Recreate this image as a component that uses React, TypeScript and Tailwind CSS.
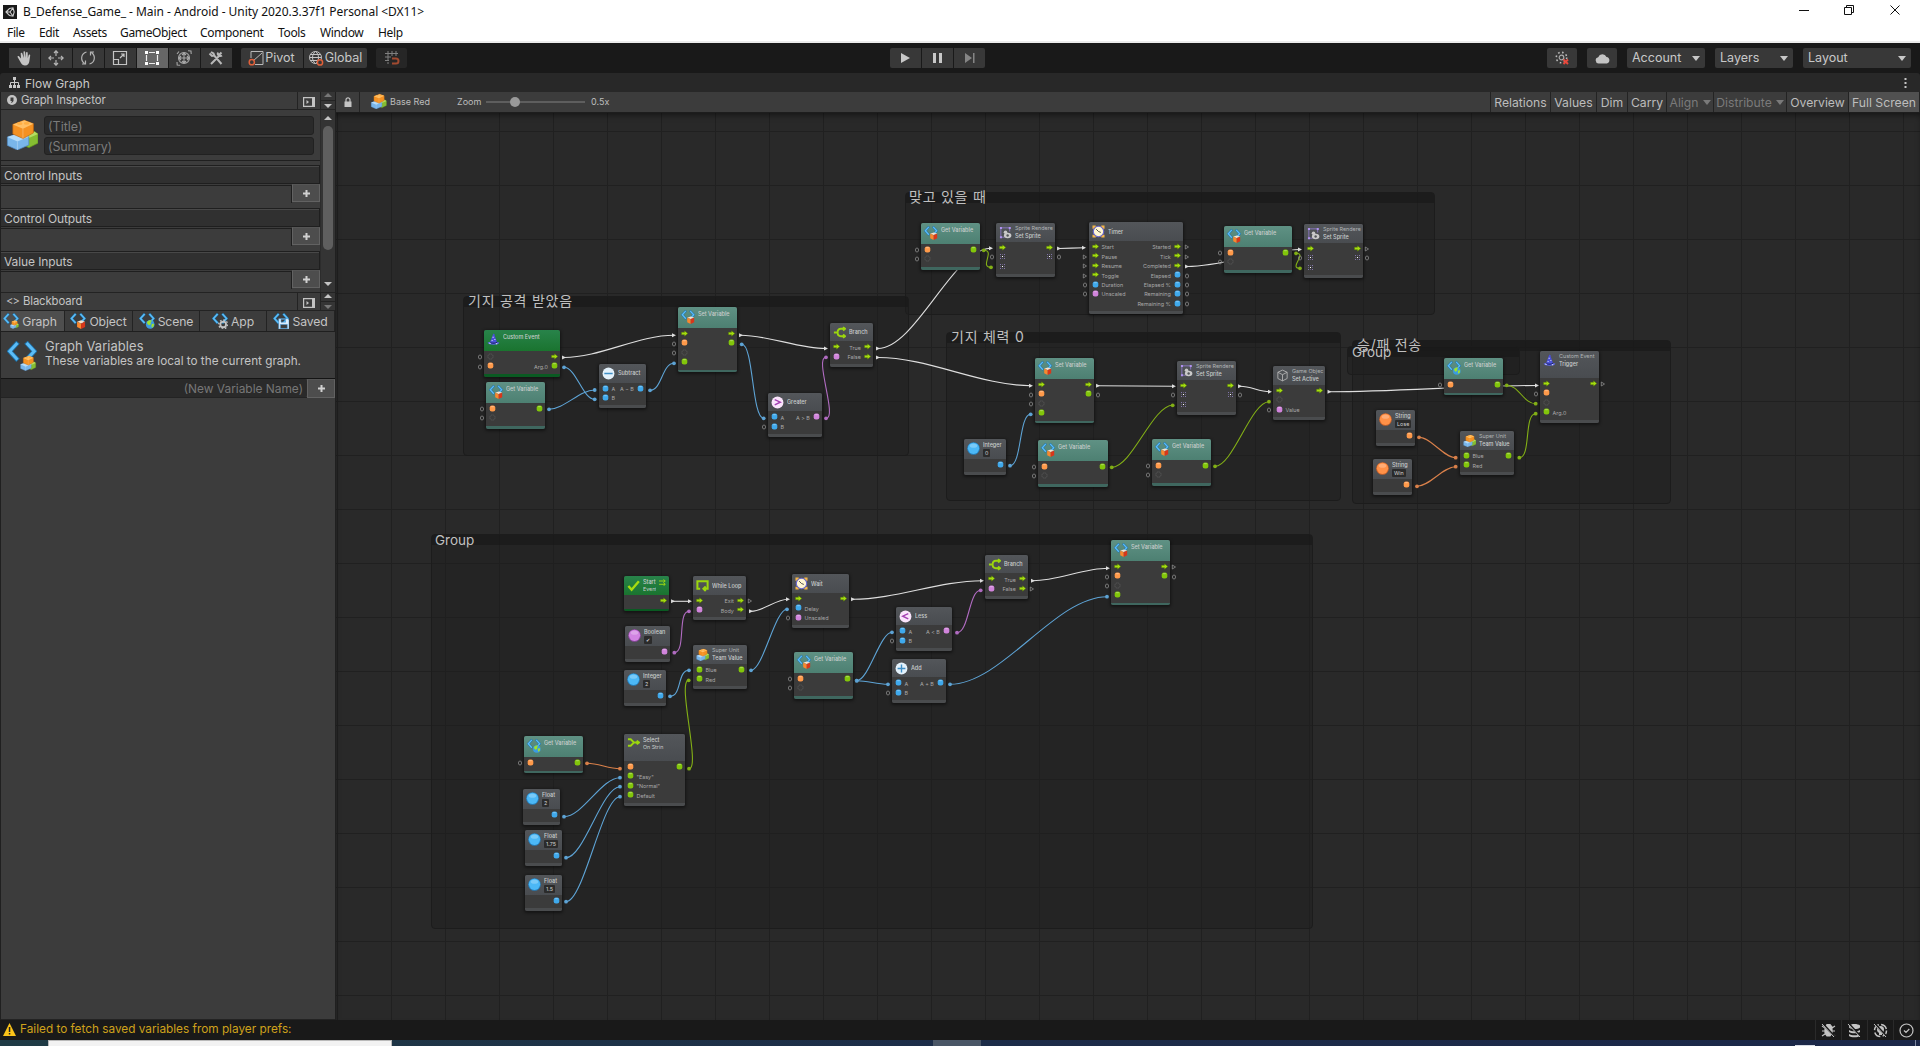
import React from "react";

type PortKind = "flow" | "orange" | "green" | "blue" | "pink" | "dim" | "sprite";
type Port = { k: PortKind; label?: string; open?: boolean } | null;
type IconKind = "var" | "globe" | "hat" | "branch" | "minus" | "plus" | "gt" | "lt" | "sprite" | "clock" | "cube" | "bricks" | "check" | "loop" | "select" | "ballBlue" | "ballPink" | "ballOrange";
type Tone = "teal" | "green" | "gray";
type NodeData = {
  x: number; y: number; w: number; h: number; hd: number; tone?: Tone; icon: IconKind;
  title: string; sub?: string; over?: string; value?: string; foot?: number; l: Port[]; r: Port[];
};

const flow: Port = { k: "flow" };
const green: Port = { k: "green" };
const orangeO: Port = { k: "orange", open: true };
const dimO: Port = { k: "dim", open: true };

const getVar = (x: number, y: number, w = 59): NodeData => ({ x, y, w, h: 46.7, hd: 20.5, tone: "teal", icon: "var", title: "Get Variable", l: [orangeO, dimO], r: [green] });
const getGlobe = (x: number, y: number): NodeData => ({ x, y, w: 59, h: 36.7, hd: 21, tone: "teal", icon: "globe", title: "Get Variable", foot: 1.5, l: [orangeO], r: [green] });
const setVar = (x: number, y: number, r: Port[]): NodeData => ({ x, y, w: 59, h: 64.6, hd: 21, tone: "teal", icon: "var", title: "Set Variable", foot: 1.5, l: [flow, orangeO, dimO, green], r });
const setSprite = (x: number, y: number, open: boolean): NodeData => ({ x, y, w: 59, h: 53.7, hd: 18.7, icon: "sprite", over: "Sprite Rendere", title: "Set Sprite", l: [flow, { k: "sprite", open: true }, { k: "sprite" }], r: [{ k: "flow", open }, { k: "sprite", open: true }] });
const literal = (x: number, y: number, w: number, icon: IconKind, title: string, value: string, k: PortKind): NodeData => ({ x, y, w, h: 35.7, hd: 20, icon, title, value, foot: 2.5, l: [], r: [{ k }] });
const team = (x: number, y: number): NodeData => ({ x, y, w: 54, h: 43.5, hd: 19, icon: "bricks", over: "Super Unit", title: "Team Value", foot: 2.5, l: [{ k: "green", label: "Blue" }, { k: "green", label: "Red" }], r: [green] });
const math = (x: number, y: number, w: number, icon: IconKind, title: string, expr: string, out: PortKind, bOpen: boolean): NodeData => ({ x, y, w, h: 43.5, hd: 18.3, icon, title, foot: 2.5, l: [{ k: "blue", label: "A" }, { k: "blue", label: "B", open: bOpen }], r: [{ k: out, label: expr }] });
const branch = (x: number, y: number, open: boolean): NodeData => ({ x, y, w: 43, h: 43.7, hd: 18.3, icon: "branch", title: "Branch", foot: 2.5, l: [flow, { k: "pink" }], r: [{ k: "flow", label: "True" }, { k: "flow", label: "False", open }] });

const nodes: NodeData[] = [
  { x: 484, y: 330, w: 76, h: 46.7, hd: 21, tone: "green", icon: "hat", title: "Custom Event", l: [dimO, orangeO], r: [flow, { k: "green", label: "Arg.0" }] },
  getVar(486, 382),
  math(599, 364.3, 47, "minus", "Subtract", "A − B", "blue", false),
  setVar(678, 307, [flow, green]),
  math(768, 393, 54, "gt", "Greater", "A > B", "pink", true),
  branch(830, 323, false),
  getVar(921, 223, 58.5),
  setSprite(996, 223, false),
  {
    x: 1089, y: 222, w: 94, h: 91.8, hd: 19, icon: "clock", title: "Timer",
    l: [{ k: "flow", label: "Start" }, { k: "flow", label: "Pause", open: true }, { k: "flow", label: "Resume", open: true }, { k: "flow", label: "Toggle", open: true }, { k: "blue", label: "Duration", open: true }, { k: "pink", label: "Unscaled", open: true }],
    r: [{ k: "flow", label: "Started", open: true }, { k: "flow", label: "Tick", open: true }, { k: "flow", label: "Completed" }, { k: "blue", label: "Elapsed", open: true }, { k: "blue", label: "Elapsed %", open: true }, { k: "blue", label: "Remaining", open: true }, { k: "blue", label: "Remaining %", open: true }],
  },
  getVar(1224, 226, 67.5),
  setSprite(1304, 224, true),
  setVar(1035, 358, [flow, { k: "green", open: true }]),
  literal(964, 439, 42, "ballBlue", "Integer", "0", "blue"),
  getVar(1038, 440, 70),
  getVar(1152, 439),
  setSprite(1177, 361, false),
  { x: 1273, y: 366, w: 52, h: 53.7, hd: 19, icon: "cube", over: "Game Objec", title: "Set Active", l: [flow, { k: "dim" }, { k: "pink", label: "Value", open: true }], r: [flow] },
  getGlobe(1444, 358),
  { x: 1540, y: 351, w: 59, h: 71.7, hd: 27, icon: "hat", over: "Custom Event", title: "Trigger", l: [flow, orangeO, { k: "dim" }, { k: "green", label: "Arg.0" }], r: [{ k: "flow", open: true }] },
  literal(1376, 410, 39, "ballOrange", "String", "Lose", "orange"),
  literal(1373, 459, 39, "ballOrange", "String", "Win", "orange"),
  team(1460, 431),
  { x: 624, y: 576, w: 45, h: 34.7, hd: 19, tone: "green", icon: "check", title: "Start", sub: "Event", foot: 1.5, l: [], r: [flow] },
  { x: 693, y: 576, w: 53, h: 43.5, hd: 19, icon: "loop", title: "While Loop", foot: 2.5, l: [flow, { k: "pink" }], r: [{ k: "flow", label: "Exit", open: true }, { k: "flow", label: "Body" }] },
  { x: 792, y: 574, w: 57, h: 53.7, hd: 19, icon: "clock", title: "Wait", l: [flow, { k: "blue", label: "Delay" }, { k: "pink", label: "Unscaled", open: true }], r: [flow] },
  literal(625, 626, 45, "ballPink", "Boolean", "✔", "pink"),
  literal(624, 670, 42, "ballBlue", "Integer", "2", "blue"),
  team(693, 645),
  getVar(794, 652),
  math(896, 607, 56, "lt", "Less", "A < B", "pink", true),
  math(892, 659, 54, "plus", "Add", "A + B", "blue", true),
  branch(985, 555, true),
  setVar(1111, 540, [{ k: "flow", open: true }, { k: "green", open: true }]),
  getGlobe(524, 736),
  { x: 624, y: 734, w: 61, h: 71.7, hd: 27, icon: "select", title: "Select", sub: "On Strin", l: [{ k: "orange" }, { k: "green", label: "\"Easy\"" }, { k: "green", label: "\"Normal\"" }, { k: "green", label: "Default" }], r: [green] },
  literal(523, 789, 37, "ballBlue", "Float", "2", "blue"),
  literal(525, 830, 37, "ballBlue", "Float", "1.75", "blue"),
  literal(525, 875, 37, "ballBlue", "Float", "1.5", "blue"),
];

const W = "#dedede", B = "#5ea4d6", G = "#83b016", P = "#b16cc2", O = "#d9804a";
const wires: [string, number, number, number, number][] = [
  [W, 564, 357.5, 674, 335.3], [W, 741, 335.3, 826, 348.5], [W, 878, 348.5, 991, 248.3], [W, 878, 357.5, 1031, 385.7],
  [W, 1059, 248.5, 1084, 247.8], [W, 1187, 266.5, 1300, 249.5], [W, 1098, 385.7, 1174, 386.3], [W, 1240, 386.3, 1270, 391.7],
  [W, 1329.5, 391.7, 1537, 385.5], [W, 673, 601.3, 690, 601.3], [W, 751, 611.3, 788, 599.3], [W, 853, 599.3, 982, 580.7], [W, 1033, 580.7, 1108, 568.3],
  [G, 1111.7, 467.3, 1172.7, 405.3], [G, 1215, 466.3, 1269, 401.7], [G, 1506.7, 385.3, 1535.7, 403.7], [G, 1519.3, 457.7, 1535.7, 413.7],
  [G, 983.7, 250.3, 991, 267.3], [G, 1296, 253.3, 1300, 268.3], [G, 689, 768.7, 688.7, 680.3],
  [B, 1010, 465.7, 1030.7, 414.3], [B, 564, 367.3, 594.7, 399.3], [B, 549, 409.3, 594.7, 390], [B, 650, 390.3, 674, 363.3],
  [B, 741.7, 344.3, 763.7, 418.3], [P, 826, 418.3, 826, 357.3], [P, 674.3, 652.7, 689, 611.3], [B, 670, 696.3, 689, 670.3],
  [B, 751, 670.3, 787, 609.3], [B, 856.7, 680.7, 892, 632.3], [B, 856.7, 680.7, 888, 684.3], [P, 957, 632.7, 980.7, 590.3],
  [B, 950, 684.3, 1107, 596.7], [O, 587, 763.3, 620, 768.7], [B, 564, 816.7, 620, 777.7], [B, 566, 857.7, 620, 786.7], [B, 566, 901.7, 620, 796.7],
  [O, 1419, 437.3, 1455.7, 457.7], [O, 1417, 486.3, 1455.7, 466.7],
];

const groups = [
  { x: 905, y: 192, w: 530, h: 123, t: "맞고 있을 때", tx: 4, ty: -5 },
  { x: 463, y: 296, w: 446, h: 160, t: "기지 공격 받았음", tx: 5, ty: -5 },
  { x: 946, y: 332, w: 395, h: 169, t: "기지 체력 0", tx: 5, ty: -5 },
  { x: 1352, y: 340, w: 319, h: 164, t: "승/패 전송", tx: 5, ty: -5 },
  { x: 1347, y: 346, w: 173, h: 29, t: "Group", tx: 5, ty: -4 },
  { x: 431, y: 534, w: 882, h: 395, t: "Group", tx: 4, ty: -4 },
];

const fills: Record<string, string> = { orange: "#ff9a4a", green: "#82c60a", blue: "#3fa9ec", pink: "#d184dc" };

function PortIcon({ k }: { k: PortKind }) {
  return (
    <svg className="block h-[7px] w-[7px] shrink-0" viewBox="0 0 7 7">
      {k === "flow" && <path d="M.5 2.3h3V.7L6.8 3.5 3.5 6.3V4.7h-3z" fill="#a4dc10" stroke="#4e7500" strokeWidth=".4" />}
      {k === "dim" && <circle cx="3.5" cy="3.5" r="2.6" fill="none" stroke="#5c5c5c" strokeWidth=".9" strokeDasharray="1.3 .7" />}
      {k === "sprite" && <g fill="#8074aa"><path d="M1 1h1v1H1zM5 1h1v1H5zM1 5h1v1H1zM5 5h1v1H5z" /><path opacity=".6" d="M3 1h1v1H3zM3 5h1v1H3zM1 3h1v1H1zM5 3h1v1H5z" /><path d="M3 3h1v1H3z" fill="#fff" /></g>}
      {fills[k] && <><rect x=".7" y=".4" width="5.6" height="6.2" rx="2.1" fill={fills[k]} /><rect x="2" y="1" width="3" height="1.2" rx=".6" fill="#fff" opacity=".3" /></>}
    </svg>
  );
}

function OpenMark({ k, side }: { k: PortKind; side: "l" | "r" }) {
  return (
    <svg className={side === "l" ? "absolute -left-[7px] top-[2.5px] h-[6px] w-[6px]" : "absolute -right-[7px] top-[2.5px] h-[6px] w-[6px]"} viewBox="0 0 6 6">
      {k === "flow" ? <path d="M1.3 1l3.2 2-3.2 2z" fill="none" stroke="#999" strokeWidth=".7" /> : <ellipse cx="3" cy="3" rx="1.6" ry="2" fill="none" stroke="#8d8d8d" strokeWidth=".75" />}
    </svg>
  );
}

function Brackets() {
  const d = "M4.4 1.4L1.3 4.8l3.1 3.4M9.6 1.4l3.1 3.4-3.1 3.4";
  return <g fill="none" strokeLinecap="square"><path d={d} stroke="#1d6fa6" strokeWidth="2.2" /><path d={d} stroke="#5cbcf6" strokeWidth="1.4" /></g>;
}

function Bricks() {
  return (
    <g strokeLinejoin="round" strokeWidth=".3">
      <path d="M8 7.5l4.5-1.6L14 7v4l-4 2-2-1z" fill="#85bd32" stroke="#5d8f1b" />
      <path d="M8 7.5l4.3-1.6L14 7l-4 1.8z" fill="#b5df62" />
      <path d="M.6 8.3L6 6.6l4 1.6v3.6L5 14 .6 12z" fill="#79b6ea" stroke="#4e86bd" />
      <path d="M.6 8.3L6 6.6l4 1.6-5 2.1z" fill="#b5dcf9" />
      <path d="M3 2.8L8 1l4 1.5v4L7.5 9 3 7z" fill="#f49122" stroke="#c0670e" />
      <path d="M3 2.8L8 1l4 1.5-4.6 2.2z" fill="#ffc067" />
      <ellipse cx="6" cy="2.5" rx="1.2" ry=".6" fill="#ffae42" /><ellipse cx="9" cy="2.4" rx="1.2" ry=".6" fill="#ffae42" />
      <path d="M7.4 4.7V9M5 10.3V14" stroke="#ffffff66" fill="none" />
    </g>
  );
}

function Globe() {
  return <g><circle cx="9.8" cy="10" r="3.8" fill="#3b9be0" /><path d="M7 8.2c1-2 3-2 4-1.6.4 1-1 1-.8 2 .6.6 0 1.6-1 1.9C8.6 11 7 10 7 8.2zM11.5 9.3l1.7.3c0 1.8-.9 2.8-1.8 3.2-.6-1-.9-2.6.1-3.5z" fill="#9ee02c" /></g>;
}

function VarCube() {
  return <g><path d="M6.2 7.7l3.5-1.3 3.5 1.3-3.5 1.4z" fill="#f7e2cc" /><path d="M6.2 7.7l3.5 1.4V14l-3.5-1.7z" fill="#f9882e" /><path d="M9.7 9.1l3.5-1.4v4.5L9.7 14z" fill="#d8371a" /></g>;
}

function NodeIcon({ k, className }: { k: IconKind; className: string }) {
  const ball = (c1: string, c2: string) => <><circle cx="7" cy="7" r="6.8" fill={c2} /><circle cx="7" cy="6.8" r="6" fill={c1} /><ellipse cx="7" cy="4" rx="4" ry="2.2" fill="#fff" opacity=".25" /></>;
  const disc = (bg: string, fg: string, d: string) => <><circle cx="7" cy="7" r="6.4" fill={bg} /><path d={d} fill="none" stroke={fg} strokeWidth="1.5" /></>;
  return (
    <svg className={className} viewBox="0 0 14 14">
      {k === "var" && <><Brackets /><VarCube /></>}
      {k === "globe" && <><Brackets /><Globe /></>}
      {k === "bricks" && <Bricks />}
      {k === "ballBlue" && ball("#4cb8f6", "#2483c4")}
      {k === "ballPink" && ball("#d184e2", "#9348a6")}
      {k === "ballOrange" && ball("#ff9148", "#d0652a")}
      {k === "minus" && disc("#e3f1fb", "#3f8fc6", "M2.5 7h9")}
      {k === "plus" && disc("#e3f1fb", "#3f8fc6", "M2.8 7h8.4M7 2.8v8.4")}
      {k === "gt" && disc("#fae4fc", "#a33fb2", "M4 4l6 2.7-6 2.8")}
      {k === "lt" && disc("#fae4fc", "#a33fb2", "M10 4L4 6.7l6 2.8")}
      {k === "hat" && <><path d="M6.8 .5l1 .8 3 8.7H3.3z" fill="#4a50d8" /><path d="M.6 10.5c2-1.5 10.5-1.5 12.8 0-.8 2.8-11.8 2.8-12.8 0z" fill="#5b66e6" /><path d="M3.3 9.3c2 1.3 5.5 1.3 7.5 0l.3 1.3c-2.4 1.2-6 1.2-8 0z" fill="#1b1e6b" /><path d="M6 4h1.200v1.200H6zM8 6.500h1v1H8zM5 7.500h1v1H5zM2.500 10.600h1.500v1H2.500zM9.500 11h1.500v1H9.500z" fill="#e6e8ff" /></>}
      {k === "branch" && <path d="M1 7h4M13 3H8.5C5.8 3 5 5 5 7s.8 4 3.5 4H13M10.800 1.200L13 3l-2.200 1.800M10.800 9.200L13 11l-2.200 1.800" fill="none" stroke="#9bd60e" strokeWidth="2" />}
      {k === "select" && <path d="M1 3.500h3L7.500 7 4 10.500H1M7 7h6M10.500 5L13 7l-2.500 2" fill="none" stroke="#9bd60e" strokeWidth="2" />}
      {k === "check" && <path d="M1.500 7.500L5 11.500 12.800 2.500" fill="none" stroke="#a6dc10" strokeWidth="2.6" />}
      {k === "loop" && <path d="M4.500 10.500H1.500v-8h11v8H8.500M10.500 8l-2.500 2.500 2.500 2.500" fill="none" stroke="#9bd60e" strokeWidth="2.2" />}
      {k === "sprite" && <><path d="M2 2h9.500M2 2v10M11.500 2v4M2 12h4" stroke="#9a80dd" fill="none" strokeWidth=".8" /><path d="M1 1h2.200v2.200H1zM10.500 1h2.200v2.200h-2.200zM1 11h2.200v2.200H1z" fill="#b093f0" /><ellipse cx="9.3" cy="10.3" rx="4" ry="3" fill="#c9c9c9" /><circle cx="7" cy="6.8" r="1.9" fill="#c9c9c9" /><circle cx="9.3" cy="10.3" r="1.3" fill="#55585c" /></>}
      {k === "clock" && <><path d="M.5 .5H4V4H.5zM10 .5h3.500V4H10zM.5 10.500H4v3H.5zM10 10.500h3.500v3H10z" fill="#f3b548" /><circle cx="7" cy="7" r="5.6" fill="#fff6d2" stroke="#6a68cc" strokeWidth="1.2" /><path d="M4.500 4.500L7 7l2.500 1" stroke="#333" strokeWidth=".9" fill="none" /></>}
      {k === "cube" && <path d="M7 1.200L12 3.500v6.700L7 12.800 2 10.200V3.500zM2 3.500l5 2.600 5-2.600M7 6.100v6.700" fill="none" stroke="#b9b9b9" strokeWidth=".9" />}
    </svg>
  );
}

const headTone: Record<Tone, string> = {
  teal: "bg-linear-to-b from-[#5f9184] to-[#4d8072]",
  green: "bg-linear-to-b from-[#28834a] to-[#1a742f]",
  gray: "bg-linear-to-b from-[#53565a] to-[#494c50]",
};
const footTone: Record<Tone, string> = { teal: "bg-[#3f675f]", green: "bg-[#0a5a22]", gray: "bg-[#4a4c4e]" };

function GraphNode({ n }: { n: NodeData }) {
  const tone = n.tone ?? "gray";
  const centered = !n.over && !n.value && !n.sub && tone === "gray";
  const iconSize = n.icon === "var" || n.icon === "globe" ? "mt-[3px] h-[14px] w-[14px]" : n.icon === "select" ? "mt-[2px] h-[13px] w-[13px]" : "mt-[2.5px] h-[13px] w-[13px]";
  return (
    <div className="absolute flex flex-col rounded-[2px] bg-[#3b3b3b] shadow-[0_1px_3px_1px_rgba(0,0,0,0.45)]" style={{ left: n.x, top: n.y, width: n.w, height: n.h }}>
      <div className={`flex shrink-0 gap-[3px] overflow-hidden rounded-t-[2px] pl-[3px] ${headTone[tone]}`} style={{ height: n.hd }}>
        <NodeIcon k={n.icon} className={`shrink-0 ${iconSize}`} />
        <div className={`flex min-w-0 flex-1 flex-col overflow-hidden whitespace-nowrap text-[5.5px] leading-[8px] text-[#c9cdcd] ${centered ? "justify-center" : n.over ? "pt-px" : n.value ? "pt-[2px]" : "pt-[3px]"}`}>
          {n.over && <span className="text-[5.4px] leading-[8px] text-[#b0b4b6]">{n.over}</span>}
          <span className={n.sub ? "leading-[6.5px] font-medium" : "font-medium"}>{n.title}</span>
          {n.sub && <span className="text-[5.3px] leading-[6px]">{n.sub}</span>}
          {n.value && <span className="w-fit rounded-[1px] bg-[#2b2b2b] px-[2px] text-[5.4px] leading-[8px] text-[#d0d0d0]">{n.value}</span>}
        </div>
        {n.icon === "check" && <svg className="mt-[3px] mr-[3px] h-[7px] w-[7px] shrink-0" viewBox="0 0 7 7"><path d="M0 2h6M4.500 .5L6.300 2 4.500 3.500M0 5.300h6M4.500 3.800l1.800 1.500-1.800 1.500" fill="none" stroke="#a6dc10" strokeWidth=".9" /></svg>}
      </div>
      <div className="flex min-h-0 flex-1 justify-between pt-[.8px]">
        {(["l", "r"] as const).map((side) => (
          <div key={side} className="flex flex-col">
            {n[side].map((p, i) => (
              <div key={i} className={`relative flex h-[9.45px] items-center gap-[3px] ${side === "l" ? "pl-[2.5px]" : "flex-row-reverse pr-[2.2px]"}`}>
                {p && <PortIcon k={p.k} />}
                {p?.label && <span className="whitespace-nowrap pt-[1.5px] text-[5.4px] leading-[8px] text-[#a9a9a9]">{p.label}</span>}
                {p?.open && <OpenMark k={p.k} side={side} />}
              </div>
            ))}
          </div>
        ))}
      </div>
      <div className={`shrink-0 rounded-b-[2px] ${footTone[tone]}`} style={{ height: n.foot ?? 3 }} />
    </div>
  );
}

function Wires() {
  return (
    <svg className="pointer-events-none absolute left-0 top-0 h-[1046px] w-[1920px]" viewBox="0 0 1920 1046">
      {wires.map(([c, x1, y1, x2, y2], i) => {
        const t = Math.max(12, (x2 - x1) * 0.33);
        const k = Math.abs(y2 - y1) < 2 ? 2 : t;
        return (
          <g key={i} fill={c}>
            <path d={`M${x1} ${y1}C${x1 + k} ${y1} ${x2 - k} ${y2} ${x2} ${y2}`} fill="none" stroke={c} strokeWidth="1.1" />
            {c === W ? (
              <><path d={`M${x1 - 2} ${y1 - 2}l4 2-4 2z`} /><path d={`M${x2 - 2} ${y2 - 2}l4 2-4 2z`} /></>
            ) : (
              <><circle cx={x1} cy={y1} r="1.9" /><circle cx={x2} cy={y2} r="1.9" /></>
            )}
          </g>
        );
      })}
    </svg>
  );
}

function Canvas() {
  return (
    <div className="relative h-[907px] flex-1 overflow-hidden bg-[#292929] bg-[linear-gradient(to_right,#202020_1px,transparent_1px),linear-gradient(to_bottom,#202020_1px,transparent_1px)] bg-[size:54px_54px] bg-[position:1px_18px] shadow-[inset_0_4px_6px_-2px_rgba(0,0,0,0.5)]">
      <div className="absolute -left-[336px] -top-[113px] h-[1046px] w-[1920px]">
        {groups.map((g, i) => (
          <div key={i} className="absolute rounded-[4px] border border-[#1c1c1c] bg-[#1e1e1e]/45" style={{ left: g.x, top: g.y, width: g.w, height: g.h }}>
            <div className="h-[10px] rounded-t-[3px] bg-[#191919]/65" />
          </div>
        ))}
        <Wires />
        {groups.map((g, i) => (
          <span key={i} className={`absolute whitespace-nowrap leading-[20px] text-[#c0c0c0] ${g.t === "Group" ? "text-[13.5px]" : "text-[14px] tracking-[.75px]"}`} style={{ left: g.x + g.tx, top: g.y + g.ty }}>{g.t}</span>
        ))}
        {nodes.map((n, i) => <GraphNode key={i} n={n} />)}
      </div>
    </div>
  );
}

function Tri({ up, className }: { up?: boolean; className: string }) {
  return <svg className={className} viewBox="0 0 8 4" preserveAspectRatio="none"><path d={up ? "M0 4L4 0l4 4z" : "M0 0h8L4 4z"} fill="currentColor" /></svg>;
}

const toolIcons: React.ReactNode[] = [
  <path key="0" fill="#c4c4c4" d="M5 8.500L3 6.300c-.8-.8-1.900 0-1.300 1L5 13c.8 1.500 2 2.500 4 2.500 2.800 0 4-1.800 4.300-4l.9-6c.1-1-1.300-1.300-1.600-.2l-.8 3-.1-5.600c0-1.100-1.600-1.100-1.700 0l-.2 5-.7-5.800C9 .8 7.400 1 7.500 2l.3 6-1.500-4.800c-.4-1-1.900-.6-1.600 .5z" />,
  <path key="1" fill="none" stroke="#b4b4b4" strokeWidth="1.2" d="M8 1v5M8 10v5M1 8h5M10 8h5M6 3l2-2.200L10 3M6 13l2 2.200L10 13M3 6L.8 8 3 10M13 6l2.200 2L13 10" />,
  <path key="2" fill="none" stroke="#b4b4b4" strokeWidth="1.2" d="M6.500 2C1 3.500 0 10 4.500 13.500M2 14h3.500v-3.500M9.500 14C15 12.500 16 6 11.500 2.500M14 2h-3.500v3.500" />,
  <path key="3" fill="none" stroke="#c4c4c4" strokeWidth="1.2" d="M1.500 1.500h13v13h-13zM1.500 9.500h5v5M8 8l4-4M9 4h3v3" />,
  <g key="4"><path fill="none" stroke="#eee" strokeWidth="1.2" d="M5 2.500h6M5 13.500h6M2.500 5v6M13.500 5v6" /><path fill="#fff" d="M1 1h3v3H1zM12 1h3v3h-3zM1 12h3v3H1zM12 12h3v3h-3z" /></g>,
  <path key="5" fill="none" stroke="#a8a8a8" strokeWidth="1.1" d="M8 2.500a5.500 5.500 0 100 11 5.500 5.500 0 000-11zM8 3v10M3 8h10M6 5l2-2 2 2M6 11l2 2 2-2M5 6L3 8l2 2M11 6l2 2-2 2M12 .8l3 .2 .2 3M1 12l.2 3 3 .2M1 4l2-2.500" />,
  <path key="6" fill="none" stroke="#b9b9b9" strokeWidth="2" d="M3 14l9-9M13.500 2.500L11 5M3 2l2.500 1.500 1 2.500 7 8M1.500 3.500L4 6l2-.5M10 2.500C9 5 12 7 14 5.500" />,
];

function Plus({ className }: { className: string }) {
  return <div className={`flex items-center justify-center border border-[#626262] border-t-[#555] bg-[#4d4d4d] ${className}`}><svg className="h-[9px] w-[9px]" viewBox="0 0 9 9"><path d="M3.500 1h2v2.500H8v2H5.500V8h-2V5.500H1v-2h2.500z" fill="#d0d0d0" /></svg></div>;
}

function DockButtons({ flip }: { flip?: boolean }) {
  return (
    <>
      <div className="flex w-[23px] items-center justify-center border-l border-[#232323] pt-[2px]">
        <svg className="h-[10px] w-[12px]" viewBox="0 0 12 10"><path d="M.6 .6h10.800v8.800H.6z" fill="none" stroke="#c4c4c4" strokeWidth="1.2" /><path d="M9 0h3v10H9zM3.500 3v4L6 5z" fill="#c4c4c4" /></svg>
      </div>
      <div className="flex w-[15px] flex-col items-center justify-around border-l border-[#232323] bg-[#353535]">
        <Tri up className={`h-[4px] w-[8px] ${flip ? "text-[#c4c4c4]" : "text-[#777]"}`} />
        <div className="h-px w-full bg-[#232323]" />
        <Tri className={`h-[4px] w-[8px] ${flip ? "text-[#777]" : "text-[#c4c4c4]"}`} />
      </div>
    </>
  );
}

const tabs: [string, string, React.ReactNode][] = [
  ["Graph", "w-[64px] bg-[#4e4e4e] pr-[5px]", <g key="g" transform="translate(6 6) scale(.55)"><Bricks /></g>],
  ["Object", "w-[68px]", <VarCube key="o" />],
  ["Scene", "w-[67px]", <Globe key="s" />],
  ["App", "w-[67px]", <g key="a"><circle cx="9.8" cy="10" r="2.5" fill="none" stroke="#c4c4c4" strokeWidth="1.6" /><circle cx="9.8" cy="10" r="3.9" fill="none" stroke="#c4c4c4" strokeWidth="1.2" strokeDasharray="1.4 1.6" /></g>],
  ["Saved", "w-[68px]", <path key="v" d="M5 5h8l1 1v8H5zM7 5.500v2.500h4V5.500zM6.500 10v3.500h6V10z" fill="#dff0ff" fillRule="evenodd" stroke="#3f97d4" strokeWidth=".5" />],
];

function Sidebar() {
  return (
    <aside className="flex h-[928px] w-[336px] shrink-0 flex-col border-l border-r border-[#202020] bg-[#3c3c3c] text-[12px] tracking-[-0.1px] text-[#c4c4c4]">
      <div className="flex h-[18px] shrink-0 border-b border-[#232323]">
        <svg className="mt-[3px] ml-[6px] h-[10px] w-[10px]" viewBox="0 0 10 10"><circle cx="5" cy="5" r="5" fill="#c4c4c4" /><path d="M3.500 2.500h3v3.500l-1.500 1.700H4L5 6H3.500z" fill="#3c3c3c" /></svg>
        <span className="ml-[4px] flex-1 text-[11.3px] leading-[16px]">Graph Inspector</span>
        <DockButtons />
      </div>
      <div className="flex h-[182px] shrink-0">
        <div className="flex w-[319px] flex-col overflow-hidden">
          <div className="flex h-[50px] shrink-0 gap-[6px] pt-[6px] pl-[5px]">
            <svg className="mt-[2px] h-[32px] w-[32px]" viewBox="0 0 14 14"><Bricks /></svg>
            <div className="flex w-[270px] flex-col gap-[2px] text-[#7b7b7b]">
              <div className="h-[19px] rounded-[3px] border border-[#212121] bg-[#2a2a2a] pl-[3px] text-[12.5px] leading-[19px] tracking-normal">(Title)</div>
              <div className="h-[18px] rounded-[3px] border border-[#212121] bg-[#2a2a2a] pl-[3px] text-[12.5px] leading-[18px] tracking-[-0.15px]">(Summary)</div>
            </div>
          </div>
          <div className="mb-[4px] h-px shrink-0 bg-[#1f1f1f]" />
          {["Control Inputs", "Control Outputs", "Value Inputs"].map((t) => (
            <div key={t} className="h-[43px] shrink-0">
              <div className="h-[19px] border border-l-0 border-[#1f1f1f] bg-[#303030] pl-[3px] leading-[19px] shadow-[inset_0_1px_0_#484848]">{t}</div>
              <div className="flex h-[19px] justify-end"><div className="mt-px flex-1 border-t border-r border-[#1f1f1f]" /><Plus className="h-[18px] w-[28px]" /></div>
            </div>
          ))}
        </div>
        <div className="flex flex-1 flex-col items-center border-l border-[#2c2c2c] bg-[#343434] py-[6px]">
          <Tri up className="h-[4px] w-[8px] text-[#c4c4c4]" />
          <div className="mt-[6px] h-[124px] w-[10px] rounded-full bg-[#5f5f5f]" />
          <div className="flex-1" />
          <Tri className="h-[4px] w-[8px] text-[#c4c4c4]" />
        </div>
      </div>
      <div className="flex h-[19px] shrink-0 border-y border-[#232323]">
        <span className="flex-1 pl-[5px] text-[11.3px] leading-[16px]"><span className="mr-[4px] tracking-[-1px]">&lt;&gt;</span>Blackboard</span>
        <DockButtons flip />
      </div>
      <div className="flex h-[21px] shrink-0 border-b border-[#1f1f1f] text-[12.2px]">
        {tabs.map(([t, cls, icon]) => (
          <div key={t} className={`flex items-center justify-center gap-[3px] border-r border-[#232323] pt-[2px] ${cls}`}>
            <svg className="mb-[2px] h-[16px] w-[16px]" viewBox="0 0 14 14"><Brackets />{icon}</svg>
            <span>{t}</span>
          </div>
        ))}
      </div>
      <div className="flex h-[47px] shrink-0 border-b border-[#141414] pt-[7px] pl-[6px]">
        <svg className="mt-[2px] h-[30px] w-[30px]" viewBox="0 0 14 14"><Brackets /><g transform="translate(6 6.500) scale(.53)"><Bricks /></g></svg>
        <div className="ml-[8px] whitespace-nowrap leading-[15px]"><div className="text-[12.9px] tracking-[.1px]">Graph Variables</div><div className="text-[11.75px] tracking-normal">These variables are local to the current graph.</div></div>
      </div>
      <div className="flex h-[19px] shrink-0 border-b border-[#232323]">
        <div className="flex-1 rounded-r-[2px] bg-[#2a2a2a] pr-[4px] text-right text-[11.9px] leading-[19px] tracking-normal text-[#777]">(New Variable Name)</div>
        <Plus className="h-[19px] w-[28px]" />
      </div>
      <div className="flex-1 border-b border-[#232323]" />
    </aside>
  );
}

const graphButtons: [string, string][] = [
  ["Relations", "w-[60px]"], ["Values", "w-[46px]"], ["Dim", "w-[31px]"], ["Carry", "w-[39px]"],
  ["Align", "w-[47px] text-[#7a7a7a]"], ["Distribute", "w-[73px] text-[#7a7a7a]"], ["Overview", "w-[62px]"], ["Full Screen", "w-[71px] bg-[#505050]"],
];

function GraphToolbar() {
  return (
    <div className="flex h-[21px] shrink-0 border-b border-[#1d1d1d] bg-[#3c3c3c] text-[#bdbdbd]">
      <div className="flex w-[24px] items-center justify-center border-r border-[#232323]">
        <svg className="h-[10px] w-[8px]" viewBox="0 0 8 10"><path d="M.5 4.500h7V10h-7z" fill="#c4c4c4" /><path d="M2 5V2.800a2 2 0 014 0V5" fill="none" stroke="#c4c4c4" strokeWidth="1.2" /></svg>
      </div>
      <svg className="mt-[1px] ml-[10px] h-[16px] w-[17px]" viewBox="0 0 14 14"><Bricks /></svg>
      <span className="ml-[3px] w-[67px] text-[9px] leading-[20px]">Base Red</span>
      <span className="w-[29px] text-[9px] leading-[20px]">Zoom</span>
      <div className="relative flex w-[99px] items-center"><div className="h-[2px] w-full bg-[#5e5e5e]" /><div className="absolute left-[24px] top-[5px] size-[10px] rounded-full bg-[#999]" /></div>
      <span className="ml-[6px] text-[9px] leading-[20px]">0.5x</span>
      <div className="flex-1" />
      <div className="flex text-[12.2px]">
        {graphButtons.map(([t, cls]) => (
          <div key={t} className={`flex items-center justify-center gap-[4px] whitespace-nowrap border-l border-[#232323] pt-[2px] ${cls}`}>
            {t}{(t === "Align" || t === "Distribute") && <Tri className="mb-[2px] h-[5px] w-[8px] shrink-0" />}
          </div>
        ))}
        <div className="w-px bg-[#232323]" />
      </div>
    </div>
  );
}

const menu: [string, string][] = [["File", "w-[32px]"], ["Edit", "w-[34px]"], ["Assets", "w-[47px]"], ["GameObject", "w-[80px]"], ["Component", "w-[78px]"], ["Tools", "w-[42px]"], ["Window", "w-[58px]"], ["Help", "w-[40px]"]];

function TitleBar() {
  return (
    <div className="flex h-[43px] shrink-0 border-b-2 border-[#ececec] bg-white font-['Noto_Sans'] text-[12px] text-[#111]">
      <div className="flex flex-1 flex-col">
        <div className="flex h-[23px] shrink-0 items-center">
          <svg className="ml-[3px] h-[14px] w-[14px]" viewBox="0 0 14 14"><path d="M0 0h14v14H0z" fill="#191919" /><path d="M3 7l3.500-3.500L10 2.800 11.200 7 10 11.200l-3.500-.7zM3 7h4M7 7l3-4M7 7l3 4" fill="none" stroke="#ccc" strokeWidth="1.1" /></svg>
          <span className="ml-[6px] whitespace-nowrap tracking-[-0.04px]">B_Defense_Game_ - Main - Android - Unity 2020.3.37f1 Personal &lt;DX11&gt;</span>
        </div>
        <div className="flex h-[18px] pl-[7px] leading-[19px] tracking-[-0.35px]">
          {menu.map(([m, w]) => <span key={m} className={w}>{m}</span>)}
        </div>
      </div>
      <svg className="mt-[4px] mr-[18px] h-[12px] w-[104px]" viewBox="0 0 104 12"><path d="M1 6.500h10M46.500 3.500h7v7h-7zM48.500 3V1.500h7v7H54M92.500 1.500l9 9M101.500 1.500l-9 9" fill="none" stroke="#111" /></svg>
    </div>
  );
}

function Toolbar() {
  const b = "flex h-[20px] items-center justify-center bg-[#383838]";
  return (
    <div className="flex h-[30px] shrink-0 items-center bg-[#191919] pl-[9px] text-[12.5px] text-[#c8c8c8]">
      <div className="flex gap-px">
        {toolIcons.map((ic, i) => <div key={i} className={`flex h-[20px] w-[31px] items-center justify-center pr-px ${i === 4 ? "bg-[#666]" : "bg-[#383838]"}`}><svg className="h-[16px] w-[16px]" viewBox="0 0 16 16">{ic}</svg></div>)}
      </div>
      <div className="ml-[9px] flex gap-px">
        <div className={`${b} w-[62px] gap-px rounded-l-[2px] pr-px`}><svg className="h-[16px] w-[16px]" viewBox="0 0 16 16"><path d="M3 8V1.500h12v13H7M5 11L14 3" fill="none" stroke="#b8b8b8" /><circle cx="3.8" cy="12.2" r="2.6" fill="none" stroke="#e0603a" strokeWidth="1.5" /></svg>Pivot</div>
        <div className={`${b} w-[63px] gap-px rounded-r-[2px] pr-px`}><svg className="h-[16px] w-[16px]" viewBox="0 0 16 16"><path d="M7.500 1.500a6 6 0 100 12 6 6 0 000-12zM7.500 1.500c-4 3-4 9 0 12M7.500 1.500c4 3 4 9 0 12M1.500 7.500h12M2.500 4.500h10M2.500 10.500h10" fill="none" stroke="#c4c4c4" /><circle cx="12" cy="12.4" r="2.6" fill="#383838" stroke="#e0603a" strokeWidth="1.5" /></svg>Global</div>
      </div>
      <div className="ml-[9px] flex h-[20px] w-[31px] items-center justify-center rounded-[2px] bg-[#262626]"><svg className="h-[16px] w-[16px]" viewBox="0 0 16 16"><path d="M4 1v9M8 1v5M12 1v5M1 3.500h13M1 7h6M1 10.500h4M4 12v2" fill="none" stroke="#808080" /><path d="M8 8.500h4a2.500 2.500 0 010 5H8" fill="none" stroke="#a14a30" strokeWidth="2" /></svg></div>
      <div className="ml-[483px] flex gap-px text-[#c8c8c8]">
        <div className={`${b} w-[31px] rounded-l-[2px]`}><svg className="h-[10px] w-[9px]" viewBox="0 0 9 10"><path d="M0 0l9 5-9 5z" fill="currentColor" /></svg></div>
        <div className={`${b} w-[31px]`}><svg className="h-[10px] w-[9px]" viewBox="0 0 9 10"><path d="M0 0h3v10H0zM6 0h3v10H6z" fill="currentColor" /></svg></div>
        <div className={`${b} w-[31px] rounded-r-[2px]`}><svg className="h-[10px] w-[10px]" viewBox="0 0 10 10"><path d="M0 0l7 5-7 5zM8 0h1.500v10H8z" fill="#858585" /></svg></div>
      </div>
      <div className="flex-1" />
      <div className={`${b} w-[30px] rounded-[2px]`}><svg className="h-[14px] w-[14px]" viewBox="0 0 14 14"><circle cx="6.5" cy="6.5" r="2.3" fill="none" stroke="#aaa" strokeWidth="1.2" /><circle cx="6.5" cy="6.5" r="5.2" fill="none" stroke="#bbb" strokeWidth="1.6" strokeDasharray="1.6 2.48" /><path d="M8.500 8.500l4.500 4.500M13 8.500L8.500 13" stroke="#e8483c" strokeWidth="1.9" /></svg></div>
      <div className={`${b} ml-[10px] w-[30px] rounded-[2px]`}><svg className="h-[11px] w-[15px]" viewBox="0 0 15 11"><path d="M3.500 10.500a3.200 3.200 0 01-.3-6.300A4.500 4.500 0 0111.500 4a3.300 3.300 0 01.3 6.500z" fill="#c4c4c4" /></svg></div>
      {([["Account", "w-[78px]"], ["Layers", "w-[78px]"], ["Layout", "w-[108px]"]] as const).map(([t, w]) => (
        <div key={t} className={`ml-[10px] flex h-[20px] items-center justify-between rounded-[2px] bg-[#383838] pr-[5px] pl-[5px] pt-px ${w}`}>{t}<Tri className="mb-px h-[5px] w-[8px]" /></div>
      ))}
      <div className="w-[9px]" />
    </div>
  );
}

function StatusBar() {
  const s = "h-[15px] w-[15px]";
  return (
    <div className="flex h-[20px] shrink-0 items-center bg-[#191919] pl-[3px] text-[11.8px] text-[#cfa21b]">
      <svg className="mr-[4px] mb-[2px] h-[13px] w-[13px]" viewBox="0 0 13 13"><path d="M6.500 0L13 13H0z" fill="#fcc419" /><path d="M5.800 4h1.500v5H5.800zM5.800 10h1.500v1.500H5.800z" fill="#222" /></svg>
      Failed to fetch saved variables from player prefs:
      <div className="flex-1" />
      {[
        <><path d="M4 4l2-2.500h3L11 4v6l-2 3H6l-2-3zM1 3l3 2M1 8h3M1 13l3-2M14 3l-3 2M14 8h-3M14 13l-3-2" fill="#c4c4c4" stroke="#c4c4c4" strokeWidth="1.2" /><path d="M2 1l12 13" stroke="#191919" strokeWidth="2" /><path d="M1 1l12 13" stroke="#c4c4c4" /></>,
        <><path d="M2 2.500c2-2 9-2 11 0v2c-2 2-9 2-11 0zM2 7c2 1.800 9 1.800 11 0v2c-2 1.800-9 1.800-11 0zM2 11c2 1.800 9 1.800 11 0v2c-2 1.800-9 1.800-11 0z" fill="#c4c4c4" /><path d="M2 1l12 13" stroke="#191919" strokeWidth="2" /><path d="M1 1l12 13" stroke="#c4c4c4" /></>,
        <><circle cx="7.5" cy="7.5" r="6" fill="none" stroke="#c4c4c4" strokeWidth="1.5" strokeDasharray="7 2.4" /><circle cx="7.5" cy="6.5" r="3.5" fill="#c4c4c4" /><path d="M6 9h3v3H6z" fill="#c4c4c4" /><path d="M2 1l12 13" stroke="#191919" strokeWidth="2" /><path d="M1 1l12 13" stroke="#c4c4c4" /></>,
        <path d="M7.500 1a6.500 6.500 0 100 13 6.500 6.500 0 000-13zM5 7.500l2 2L10.300 6" fill="none" stroke="#c4c4c4" strokeWidth="1.2" />,
      ].map((g, i) => <div key={i} className="flex h-[20px] w-[26px] items-center justify-center border-l border-[#2a2a2a] pr-px"><svg className={s} viewBox="0 0 15 15">{g}</svg></div>)}
      <div className="w-px" />
    </div>
  );
}

export default function App() {
  return (
    <div className="flex h-[1046px] w-[1920px] flex-col overflow-hidden bg-[#191919] font-['Inter','Noto_Sans_CJK_KR',sans-serif]">
      <TitleBar />
      <Toolbar />
      <div className="flex h-[19px] shrink-0 items-center rounded-t-[3px] bg-[#282828] pl-[9px] text-[12px] text-[#c8c8c8]">
        <svg className="mr-[5px] h-[11px] w-[11px]" viewBox="0 0 11 11"><path d="M4 0h3v3H4zM0 8h3v3H0zM4 8h3v3H4zM8 8h3v3H8z" fill="#c8c8c8" /><path d="M5.500 3v5M1.500 8V5.500h8V8" fill="none" stroke="#c8c8c8" /></svg>
        <span className="pt-[3px]">Flow Graph</span>
        <div className="flex-1" />
        <svg className="mr-[13px] h-[10px] w-[3px]" viewBox="0 0 3 10"><path d="M.5 0h2v2h-2zM.5 4h2v2h-2zM.5 8h2v2h-2z" fill="#c4c4c4" /></svg>
      </div>
      <div className="flex h-[928px] shrink-0">
        <Sidebar />
        <div className="flex min-w-0 flex-1 flex-col"><GraphToolbar /><Canvas /></div>
      </div>
      <StatusBar />
      <div className="flex h-[6px] shrink-0 bg-linear-to-r from-[#1f3b45] via-[#1c2c48] to-[#1b2748]">
        <div className="ml-[48px] w-[344px] border border-b-0 border-[#b9b9b9] bg-[#f2f2f2]" />
        <div className="ml-[541px] w-[48px] bg-[#4a5666]" />
        <div className="flex-1" />
        <div className="mt-[4.5px] mr-[100px] h-[2px] w-[20px] bg-[#d5dae4]" />
        <div className="mr-[4px] w-px bg-[#7c87a0]" />
      </div>
    </div>
  );
}
